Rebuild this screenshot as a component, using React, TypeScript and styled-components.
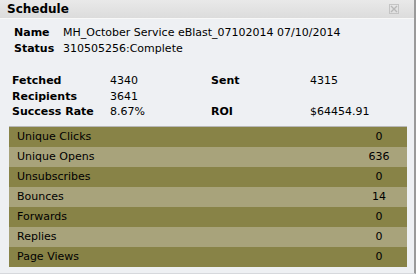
import React from "react";
import styled, { createGlobalStyle } from "styled-components";

const GlobalStyle = createGlobalStyle`
  html, body {
    margin: 0;
    padding: 0;
    background: #ffffff;
  }
  body {
    font-family: "DejaVu Sans", Verdana, sans-serif;
    font-size: 11px;
    color: #000;
  }
`;

const Panel = styled.div`
  width: 416px;
  height: 274px;
  border-right: 2px solid #9a9a9a;
  border-bottom: 1px solid #d6d8dc;
  background: #eef0f3;
  display: flex;
  flex-direction: column;
  box-sizing: border-box;
`;

const Header = styled.div`
  height: 18px;
  display: flex;
  align-items: center;
  justify-content: space-between;
  padding: 0 15px 0 7px;
  background: linear-gradient(#e9e9e9, #dcdcdc);
  border-bottom: 1px solid #f8f8f8;
`;

const Title = styled.span`
  font-weight: bold;
  font-size: 12px;
`;

const Body = styled.div`
  display: flex;
  flex-direction: column;
  padding: 6px 7px 0 9px;
`;

const Info = styled.div`
  display: grid;
  grid-template-columns: 49px auto;
  padding-left: 5px;
  line-height: 16px;
`;

const Stats = styled.div`
  display: grid;
  grid-template-columns: 98px 101px 99px auto;
  margin-top: 16px;
  padding-left: 3px;
  line-height: 15.5px;
`;

const Label = styled.span`
  font-weight: bold;
`;

const Value = styled.span``;

const Table = styled.div`
  margin-top: 6px;
  border-top: 1px solid #b8b8b8;
  display: flex;
  flex-direction: column;
`;

const Row = styled.div<{ $dark: boolean }>`
  height: 20px;
  display: flex;
  align-items: center;
  justify-content: space-between;
  padding: 0 0 0 8px;
  background: ${(p) => (p.$dark ? "#888347" : "#a8a37b")};
`;

const RowValue = styled.span`
  width: 56px;
  text-align: center;
`;

const rows: [string, string][] = [
  ["Unique Clicks", "0"],
  ["Unique Opens", "636"],
  ["Unsubscribes", "0"],
  ["Bounces", "14"],
  ["Forwards", "0"],
  ["Replies", "0"],
  ["Page Views", "0"],
];

const CloseIcon = () => (
  <svg width="10" height="10" viewBox="0 0 10 10">
    <rect x="0.5" y="0.5" width="9" height="9" fill="none" stroke="#c4c4c4" />
    <path d="M2 2 L8 8 M8 2 L2 8" stroke="#b8b8b8" strokeWidth="1.4" />
  </svg>
);

export default function App() {
  return (
    <>
      <GlobalStyle />
      <Panel>
        <Header>
          <Title>Schedule</Title>
          <CloseIcon />
        </Header>
        <Body>
          <Info>
            <Label>Name</Label>
            <Value>MH_October Service eBlast_07102014 07/10/2014</Value>
            <Label>Status</Label>
            <Value>310505256:Complete</Value>
          </Info>
          <Stats>
            <Label>Fetched</Label>
            <Value>4340</Value>
            <Label>Sent</Label>
            <Value>4315</Value>
            <Label>Recipients</Label>
            <Value>3641</Value>
            <Label></Label>
            <Value></Value>
            <Label>Success Rate</Label>
            <Value>8.67%</Value>
            <Label>ROI</Label>
            <Value>$64454.91</Value>
          </Stats>
          <Table>
            {rows.map(([name, val], i) => (
              <Row key={name} $dark={i % 2 === 0}>
                <span>{name}</span>
                <RowValue>{val}</RowValue>
              </Row>
            ))}
          </Table>
        </Body>
      </Panel>
    </>
  );
}
